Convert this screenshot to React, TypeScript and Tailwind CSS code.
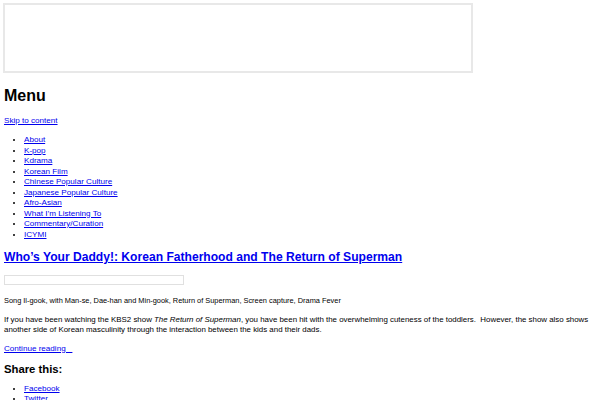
import React from 'react';

const links = [
  'About',
  'K-pop',
  'Kdrama',
  'Korean Film',
  'Chinese Popular Culture',
  'Japanese Popular Culture',
  'Afro-Asian',
  'What I’m Listening To',
  'Commentary/Curation',
  'ICYMI',
];

const A: React.FC<{ children: React.ReactNode; className?: string }> = ({ children, className = '' }) => (
  <a href="#" className={`text-[#0000ee] underline ${className}`}>
    {children}
  </a>
);

export default function App() {
  return (
    <div className="h-[400px] overflow-hidden bg-white text-black font-['Liberation_Sans',Arial,sans-serif] text-[8.1px] leading-[10.5px]">
      {/* ad slot placeholder */}
      <div className="ml-[3px] mt-[3px] h-[70px] w-[470px] border-2 border-[#e8e8e8]" />

      <div className="px-[4px]">
        <h1 className="mt-[12px] text-[16px] font-bold leading-[21px]">Menu</h1>
        <div className="mt-[10px]">
          <A>Skip to content</A>
        </div>

        <ul className="mt-[8.5px] list-disc pl-[20px]">
          {links.map((l) => (
            <li key={l}>
              <A>{l}</A>
            </li>
          ))}
        </ul>

        <h2 className="mt-[9px] text-[12.1px] font-bold leading-[16px]">
          <A>Who’s Your Daddy!: Korean Fatherhood and The Return of Superman</A>
        </h2>

        <div className="mt-[10px] h-[10px] w-[180px] border border-[#e0e0e0]" />

        <p className="mt-[10.75px] text-[7.4px]">
          Song Il-gook, with Man-se, Dae-han and Min-gook, Return of Superman, Screen capture, Drama Fever
        </p>

        <p className="mt-[8.5px] text-[7.9px]">
          If you have been watching the KBS2 show <em>The Return of Superman</em>, you have been hit with the
          overwhelming cuteness of the toddlers.&nbsp; However, the show also shows another side of Korean
          masculinity through the interaction between the kids and their dads.
        </p>

        <div className="mt-[8px]">
          <A>Continue reading&nbsp;&nbsp;&nbsp;</A>
        </div>

        <h3 className="mt-[8.75px] text-[11.3px] font-bold leading-[12px]">Share this:</h3>
        <ul className="mt-[8.75px] list-disc pl-[20px]">
          <li>
            <A>Facebook</A>
          </li>
          <li>
            <A>Twitter</A>
          </li>
        </ul>
      </div>
    </div>
  );
}
